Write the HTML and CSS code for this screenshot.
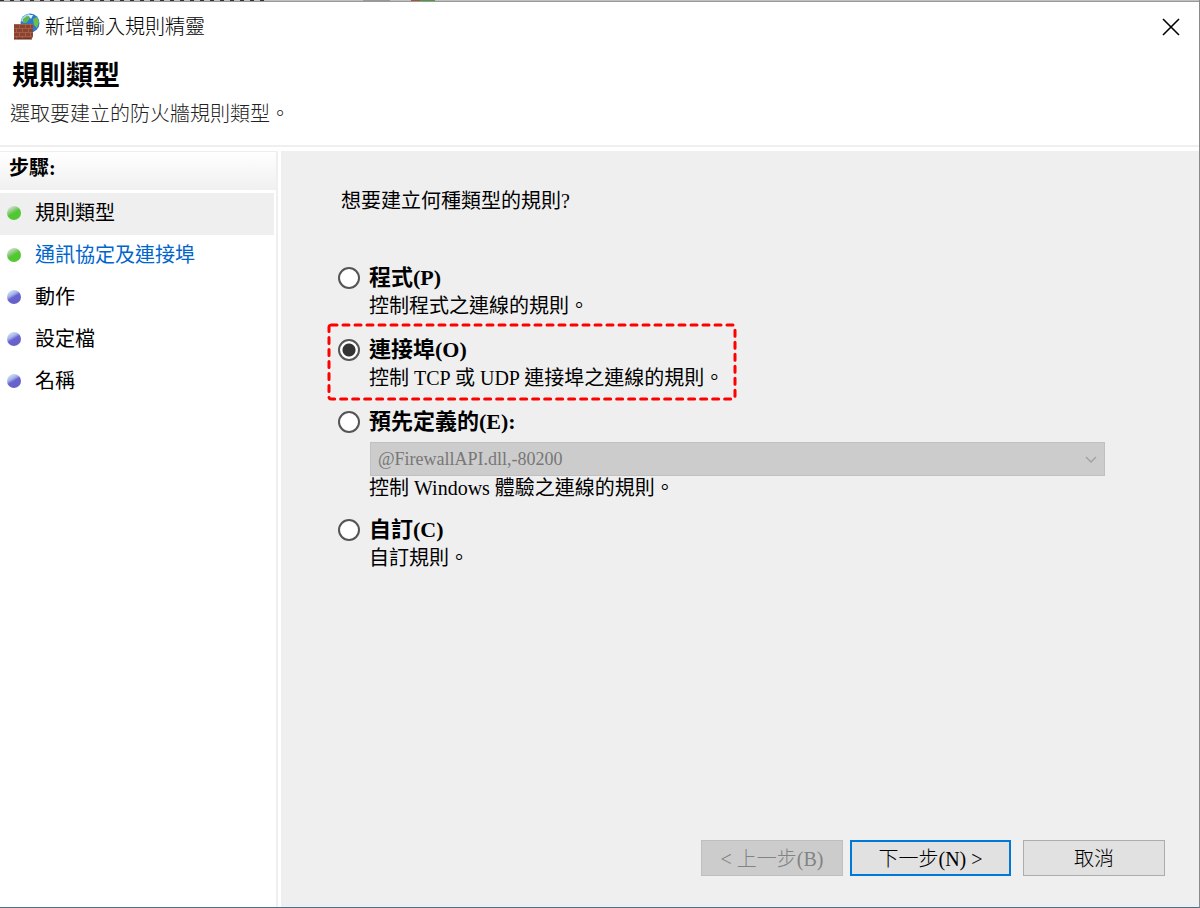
FILE: index.html
```
<!DOCTYPE html>
<html lang="zh-Hant">
<head>
    <meta charset="UTF-8">
    <meta name="viewport" content="width=device-width, initial-scale=1.0">
    <title>新增輸入規則精靈</title>
    <link rel="stylesheet" href="styles.css">
</head>
<body>
    <div class="window">
        <div class="backdrop" aria-hidden="true"></div>
        <header class="header">
            <div class="titlebar">
                <svg class="app-icon" width="28" height="28" viewBox="0 0 28 28" aria-hidden="true">
                    <circle cx="17" cy="10" r="9.500" fill="#2f78d0"/>
                    <path d="M8 8 Q10 1 17 1 Q15 5 11 9Z" fill="#a9d8f7"/>
                    <path d="M10 6 L14 3 L17 4 L16 7 L13 10 L10 10Z" fill="#5cb947"/>
                    <path d="M20 6 L24 4 L26 9 L24 15 L21 12Z" fill="#6cc04a"/>
                    <path d="M15 2 L20 2 L18 6Z" fill="#e4f5ff"/>
                    <path d="M1 11H20V24L18 26H1Z" fill="#8a4330"/>
                    <path d="M1 11.500H20" stroke="#a86249"/>
                    <path d="M1 15.500H20M1 19.500H20M1 23.500H20M6.500 11V15M12.500 11V15M17.500 11V15M3.500 15V19M9.500 15V19M15.500 15V19M6.500 19V23M12.500 19V23M17.500 19V23M3.500 23V26M9.500 23V26" stroke="#b0664c" stroke-opacity="0.7"/>
                    <path d="M1 26H19" stroke="#5d281b"/>
                </svg>
                <span class="title">新增輸入規則精靈</span>
                <button class="close" type="button" aria-label="關閉">
                    <svg width="18" height="18" viewBox="0 0 18 18" aria-hidden="true">
                        <path d="M1 1L17 17M17 1L1 17" stroke="#000" stroke-width="1.600"/>
                    </svg>
                </button>
            </div>
            <h1>規則類型</h1>
            <p class="subtitle">選取要建立的防火牆規則類型。</p>
        </header>

        <div class="body">
            <nav class="steps">
                <h2>步驟:</h2>
                <ul>
                    <li class="step done current">規則類型</li>
                    <li class="step done"><a href="#">通訊協定及連接埠</a></li>
                    <li class="step">動作</li>
                    <li class="step">設定檔</li>
                    <li class="step">名稱</li>
                </ul>
            </nav>

            <main class="content">
                <form class="rule-form">
                    <p class="question">想要建立何種類型的規則?</p>

                    <div class="option">
                        <input type="radio" name="rule" id="program">
                        <label for="program">程式(P)</label>
                        <p>控制程式之連線的規則。</p>
                    </div>

                    <div class="option">
                        <input type="radio" name="rule" id="port" checked>
                        <label for="port">連接埠(O)</label>
                        <p>控制 TCP 或 UDP 連接埠之連線的規則。</p>
                        <svg class="highlight" aria-hidden="true">
                            <rect width="100%" height="100%" rx="2"/>
                        </svg>
                    </div>

                    <div class="option">
                        <input type="radio" name="rule" id="predefined">
                        <label for="predefined">預先定義的(E):</label>
                        <div class="select-box">
                            <select aria-label="預先定義的" disabled>
                                <option>@FirewallAPI.dll,-80200</option>
                            </select>
                            <svg class="chevron" width="12" height="8" viewBox="0 0 12 8" aria-hidden="true">
                                <path d="M1 1L6 6L11 1" fill="none" stroke="#a0a0a0" stroke-width="1.300"/>
                            </svg>
                        </div>
                        <p>控制 Windows 體驗之連線的規則。</p>
                    </div>

                    <div class="option">
                        <input type="radio" name="rule" id="custom">
                        <label for="custom">自訂(C)</label>
                        <p>自訂規則。</p>
                    </div>

                    <div class="buttons">
                        <button class="btn" type="button" disabled>&lt; 上一步(B)</button>
                        <button class="btn next" type="button">下一步(N) &gt;</button>
                        <button class="btn" type="button">取消</button>
                    </div>
                </form>
            </main>
        </div>
    </div>
</body>
</html>
```
FILE: styles.css
```
* {
    box-sizing: border-box;
}
body {
    margin: 0;
    font-family: "Liberation Serif", "Noto Sans CJK TC", serif;
    font-size: 20px;
    line-height: 28px;
    color: #000;
    background-color: #fff;
}
h1, h2, p, ul {
    margin: 0;
    padding: 0;
}
.window {
    display: flex;
    flex-direction: column;
    min-height: 100vh;
    border-right: 1px solid #8a8a8a;
    border-bottom: 1px solid #4a7088;
}
/* edge of the window behind */
.backdrop {
    height: 2px;
    border-bottom: 1px solid #999;
    background-color: #c0c0c0;
    background-image:
        linear-gradient(90deg, transparent 363px, #999 363px, #999 390px, transparent 390px, transparent 411px, #a5543c 411px, #a5543c 420px, #4f9a3c 420px, #4f9a3c 435px, transparent 435px),
        repeating-linear-gradient(90deg, #333 0, #333 4px, #c0c0c0 4px, #c0c0c0 10px);
    background-size: 100% 1px, 265px 1px;
    background-repeat: no-repeat;
}

/* header */
.header {
    padding-bottom: 17px;
    border-bottom: 2px solid #efefef;
}
.titlebar {
    display: flex;
    align-items: center;
    height: 50px;
    padding: 0 14px 0 13px;
}
.title {
    flex: 1;
    margin-left: 4px;
    font-weight: 300;
}
.close {
    display: flex;
    padding: 5px;
    border: none;
    background: none;
}
h1 {
    padding-left: 12px;
    font-size: 27px;
    line-height: 48px;
}
.subtitle {
    padding-left: 10px;
    font-weight: 300;
    color: #222;
}

/* body */
.body {
    display: flex;
    flex: 1;
    margin-top: 4px;
}
.steps {
    width: 278px;
    margin-right: 3px;
    border-top: 1px solid #eee;
    border-right: 2px solid #efefef;
}
.steps h2 {
    height: 38px;
    padding-left: 9px;
    font-size: 20px;
    line-height: 32px;
    background: linear-gradient(#fff, #f0f0f0);
}
.steps ul {
    margin: 3px 2px 0 0;
    list-style: none;
}
.step {
    display: flex;
    align-items: center;
    gap: 14px;
    height: 42px;
    padding: 0 0 3px 7px;
}
.step::before {
    content: "";
    width: 14px;
    height: 14px;
    border-radius: 50%;
    background: linear-gradient(150deg, #cfe6f5 10%, #a5b4e6 35%, #6a63d0 50%, #6560c8 80%, #a9bde0);
}
.step.done::before {
    background: linear-gradient(150deg, #d5e8d2 10%, #8ecb80 35%, #52c832 50%, #4fc831 80%, #a9dc9c);
}
.step.current {
    background-color: #efefef;
}
.step a {
    color: #0066cc;
    text-decoration: none;
}
.content {
    display: flex;
    flex: 1;
    background-color: #efefef;
}
.rule-form {
    display: flex;
    flex: 1;
    flex-direction: column;
    gap: 16px;
    padding: 36px 34px 31px 57px;
}
.question {
    margin: 0 0 33px 3px;
}

/* options */
.option {
    position: relative;
    display: grid;
    grid-template-columns: 22px 1fr;
    column-gap: 9px;
    align-items: center;
    margin-right: 60px;
}
.option label {
    font-size: 22px;
    font-weight: bold;
}
.option p, .select-box {
    grid-column: 2;
}
.option input {
    appearance: none;
    width: 22px;
    height: 22px;
    margin: 0;
    border: 2px solid #555;
    border-radius: 50%;
    background-color: #fff;
}
.option input:checked {
    background: radial-gradient(circle, #333 6px, #fff 7px);
}
.select-box {
    position: relative;
    margin: 6px 0 0 1px;
}
select {
    appearance: none;
    display: block;
    width: 100%;
    height: 34px;
    padding: 0 7px;
    border: 1px solid #c0c0c0;
    border-radius: 0;
    background-color: #ccc;
    color: #777;
    font: inherit;
    font-size: 18px;
    opacity: 1;
}
.option .select-box + p {
    line-height: 24px;
}
.chevron {
    position: absolute;
    top: 14px;
    right: 8px;
}
.highlight {
    position: absolute;
    top: -11px;
    left: -9px;
    width: 406px;
    height: 74px;
    overflow: visible;
    pointer-events: none;
}
.highlight rect {
    fill: none;
    stroke: #f00;
    stroke-width: 3;
    stroke-linecap: round;
    stroke-dasharray: 6 6;
}

/* buttons */
.buttons {
    display: flex;
    justify-content: flex-end;
    margin-top: auto;
}
.btn {
    width: 142px;
    height: 36px;
    padding: 2px 0 0;
    border: 1px solid #adadad;
    background-color: #e1e1e1;
    color: #000;
    font: inherit;
    font-weight: 300;
}
.btn:disabled {
    border-color: #bfbfbf;
    background-color: #ccc;
    color: #838383;
}
.btn.next {
    width: 161px;
    margin: 0 12px 0 7px;
    border: 2px solid #0078d7;
}
```
